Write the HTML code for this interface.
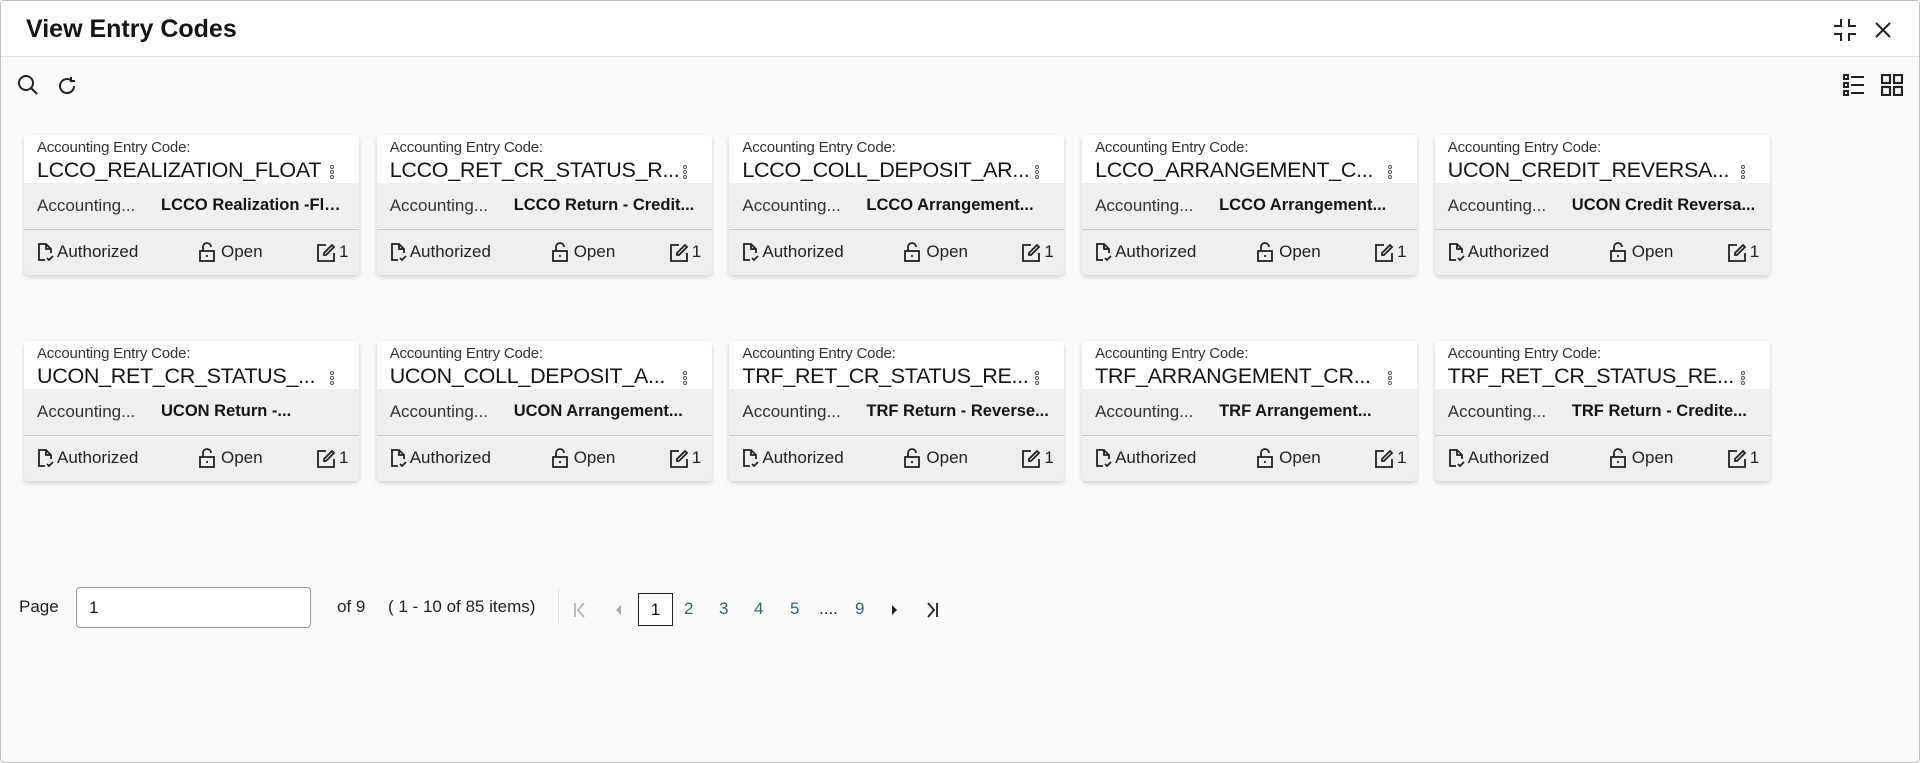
<!DOCTYPE html>
<html><head><meta charset="utf-8"><style>
*{margin:0;padding:0;box-sizing:border-box}
body{width:1920px;height:763px;background:#fff;font-family:"Liberation Sans",sans-serif;color:#161513;position:relative;overflow:hidden}
.win{position:absolute;left:0;top:0;width:1920px;height:763px;border:1px solid #bdbdbd;border-radius:4px;background:#fafafa}
.hdr{position:absolute;left:0;top:0;width:100%;height:56px;background:#fff;border-bottom:1px solid #e4e4e4}
.hdr h1{position:absolute;left:25px;top:14px;font-size:25px;font-weight:bold}
.card{position:absolute;width:335px;height:140px;background:#efefef;border-radius:4px;box-shadow:0 2px 5px rgba(0,0,0,.18);overflow:hidden}
.card .top{position:absolute;left:0;top:0;width:100%;height:48px;background:#fff}
.lbl{position:absolute;left:13px;top:4px;font-size:15px;color:#333;letter-spacing:-0.2px}
.code{position:absolute;left:13px;top:23px;font-size:21.5px;letter-spacing:-0.3px;white-space:nowrap;max-width:290px;overflow:hidden;text-overflow:ellipsis}
.dots{position:absolute;right:25px;top:30px;width:4px}
.dots i{display:block;width:4px;height:4px;border:1px solid #555;border-radius:50%;margin-bottom:1px}
.r2{position:absolute;top:61px;font-size:17px;left:13px;color:#333}
.r2b{position:absolute;top:61px;left:137px;font-size:16.5px;font-weight:bold;white-space:nowrap;max-width:185px;overflow:hidden;text-overflow:ellipsis}
.div{position:absolute;left:0;top:94px;width:100%;height:1px;background:#c8c8c8}
.ft{position:absolute;top:107px;font-size:17px;color:#222;display:flex;align-items:center}
.ft svg{margin-right:3px}
.pg{position:absolute;top:596px;font-size:17px;color:#222}
.num{position:absolute;top:598px;font-size:17px;color:#266a87}
</style></head><body>
<div class="win">
<div class="hdr"><h1>View Entry Codes</h1>
<svg style="position:absolute;left:1832px;top:17px" width="24" height="24" viewBox="0 0 24 24" fill="none" stroke="#222" stroke-width="2"><path d="M8 1v7H1M16 1v7h7M8 23v-7H1M16 23v-7h7"/></svg>
<svg style="position:absolute;left:1873px;top:20px" width="18" height="18" viewBox="0 0 18 18" stroke="#222" stroke-width="2"><path d="M2 2l14 14M16 2L2 16"/></svg>
</div>
<svg style="position:absolute;left:16px;top:73px" width="22" height="22" viewBox="0 0 22 22" fill="none" stroke="#222" stroke-width="2"><circle cx="9" cy="9" r="7"/><path d="M14 14l6 6"/></svg>
<svg style="position:absolute;left:55px;top:74px" width="22" height="22" viewBox="0 0 22 22" fill="none" stroke="#222" stroke-width="2"><path d="M18 11a7 7 0 1 1-3-5.7"/><path d="M15 2v4h4" /></svg>
<svg style="position:absolute;left:1842px;top:73px" width="22" height="22" viewBox="0 0 22 22" fill="none" stroke="#222" stroke-width="2"><rect x="1" y="1" width="4" height="4"/><rect x="1" y="9" width="4" height="4"/><rect x="1" y="17" width="4" height="4"/><path d="M8 3h13M8 11h13M8 19h13"/></svg>
<svg style="position:absolute;left:1880px;top:73px" width="22" height="22" viewBox="0 0 22 22" fill="none" stroke="#222" stroke-width="2.2"><rect x="1" y="1" width="8" height="8"/><rect x="13" y="1" width="8" height="8"/><rect x="1" y="13" width="8" height="8"/><rect x="13" y="13" width="8" height="8"/></svg>
<div id="cards"></div>
<div class="pg" style="left:18px">Page</div>
<div style="position:absolute;left:75px;top:586px;width:235px;height:41px;border:1px solid #999;border-radius:4px;background:#fff;font-size:17px;padding:10px 12px">1</div>
<div class="pg" style="left:336px">of 9</div>
<div class="pg" style="left:387px">( 1 - 10 of 85 items)</div>
<div style="position:absolute;left:557px;top:588px;width:1px;height:36px;background:#ddd"></div>
<svg style="position:absolute;left:572px;top:601px" width="14" height="16" viewBox="0 0 14 16" fill="none" stroke="#aaa" stroke-width="1.6"><path d="M2 1v14M11 1L5 8l6 7"/></svg>
<svg style="position:absolute;left:613px;top:603px" width="8" height="12" viewBox="0 0 8 12"><path d="M7 1L2 6l5 5z" fill="#aaa"/></svg>
<div style="position:absolute;left:637px;top:592px;width:35px;height:33px;border:1px solid #222;font-size:17px;text-align:center;line-height:31px;background:#fff">1</div>
<div class="num" style="left:683px">2</div>
<div class="num" style="left:718px">3</div>
<div class="num" style="left:753px">4</div>
<div class="num" style="left:789px">5</div>
<div class="pg" style="left:818px;top:598px">....</div>
<div class="num" style="left:854px">9</div>
<svg style="position:absolute;left:890px;top:603px" width="8" height="12" viewBox="0 0 8 12"><path d="M1 1l5 5-5 5z" fill="#222"/></svg>
<svg style="position:absolute;left:924px;top:601px" width="14" height="16" viewBox="0 0 14 16" fill="none" stroke="#222" stroke-width="1.8"><path d="M12 1v14M3 1l6 7-6 7"/></svg>
</div>
<script>
var d=[["LCCO_REALIZATION_FLOAT","LCCO Realization -Flo..."],["LCCO_RET_CR_STATUS_R...","LCCO Return - Credit..."],["LCCO_COLL_DEPOSIT_AR...","LCCO Arrangement..."],["LCCO_ARRANGEMENT_C...","LCCO Arrangement..."],["UCON_CREDIT_REVERSA...","UCON Credit Reversa..."],["UCON_RET_CR_STATUS_...","UCON Return -..."],["UCON_COLL_DEPOSIT_A...","UCON Arrangement..."],["TRF_RET_CR_STATUS_RE...","TRF Return - Reverse..."],["TRF_ARRANGEMENT_CR...","TRF Arrangement..."],["TRF_RET_CR_STATUS_RE...","TRF Return - Credite..."]];
var doc='<svg width="17" height="19" viewBox="0 0 17 19" fill="none" stroke="#222" stroke-width="1.8"><path d="M8 17H2V1h7l5 5v4M9 1v5h5"/><path d="M10 15l2 2 4-4"/></svg>';
var lock='<svg width="16" height="20" viewBox="0 0 16 20" fill="none" stroke="#222" stroke-width="1.8"><rect x="1" y="9" width="14" height="10"/><path d="M4 9V5a4 4 0 0 1 8 0"/><path d="M8 13v2"/></svg>';
var ed='<svg width="19" height="19" viewBox="0 0 19 19" fill="none" stroke="#222" stroke-width="1.8"><path d="M9 2H1v16h16v-8"/><path d="M15 2l2 2-8 8H7v-2z"/></svg>';
var h='';
d.forEach(function(c,i){var x=23+(i%5)*352.7,y=134+Math.floor(i/5)*206;
h+='<div class="card" style="left:'+x+'px;top:'+y+'px"><div class="top"></div><div class="lbl">Accounting Entry Code:</div><div class="code">'+c[0]+'</div><div class="dots"><i></i><i></i><i></i></div><div class="r2">Accounting...</div><div class="r2b">'+c[1]+'</div><div class="div"></div><div class="ft" style="left:13px">'+doc+'Authorized</div><div class="ft" style="left:175px">'+lock+'<span style="margin-left:3px">Open</span></div><div class="ft" style="left:293px">'+ed+'1</div></div>';});
document.getElementById('cards').innerHTML=h;
</script>
</body></html>
